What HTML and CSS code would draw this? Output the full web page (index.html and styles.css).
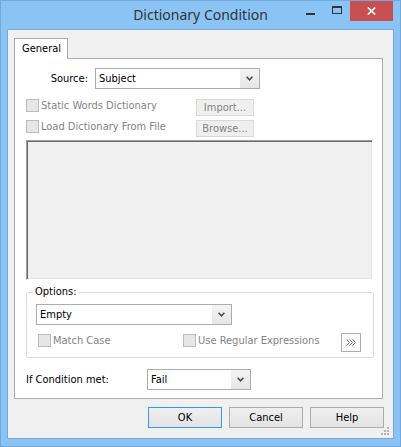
FILE: index.html
```html
<!DOCTYPE html>
<html>
<head>
<meta charset="utf-8">
<link rel="stylesheet" href="styles.css">
</head>
<body>
<div class="window">
  <div class="titlebar">
    <div class="title">Dictionary Condition</div>
    <div class="controls">
      <div class="ctl ctl-min"><span class="min-bar"></span></div>
      <div class="ctl ctl-max"><span class="max-box"></span></div>
      <div class="ctl ctl-close">
        <svg width="9" height="8" viewBox="0 0 9 8"><path d="M0.8 0.5 L8.2 7.5 M8.2 0.5 L0.8 7.5" stroke="#fff" stroke-width="1.7" fill="none"/></svg>
      </div>
    </div>
  </div>
  <div class="client">
    <div class="tabstrip"><div class="tab">General</div></div>
    <div class="panel">
      <div class="row-source">
        <label class="lbl-source">Source:</label>
        <div class="combo combo-source">
          <span class="combo-text">Subject</span>
          <span class="combo-arrow"><svg width="7" height="5" viewBox="0 0 7 5"><path d="M0.6 0.8 L3.5 3.8 L6.4 0.8" stroke="#474747" stroke-width="1.5" fill="none"/></svg></span>
        </div>
      </div>
      <div class="opt-row first">
        <div class="check disabled"><span class="box"></span><span>Static Words Dictionary</span></div>
        <div class="btn small disabled">Import...</div>
      </div>
      <div class="opt-row second">
        <div class="check disabled"><span class="box"></span><span>Load Dictionary From File</span></div>
        <div class="btn small disabled">Browse...</div>
      </div>
      <div class="listbox"></div>
      <div class="group">
        <div class="legend">Options:</div>
        <div class="combo combo-options">
          <span class="combo-text">Empty</span>
          <span class="combo-arrow"><svg width="7" height="5" viewBox="0 0 7 5"><path d="M0.6 0.8 L3.5 3.8 L6.4 0.8" stroke="#474747" stroke-width="1.5" fill="none"/></svg></span>
        </div>
        <div class="group-row">
          <div class="check disabled match"><span class="box"></span><span>Match Case</span></div>
          <div class="check disabled"><span class="box"></span><span>Use Regular Expressions</span></div>
          <div class="btn more">
            <svg width="11" height="7" viewBox="0 0 11 7"><path d="M0.5 0.5 L3.5 3.5 L0.5 6.5 M3.5 0.5 L6.5 3.5 L3.5 6.5 M6.5 0.5 L9.5 3.5 L6.5 6.5" stroke="#6a6a6a" stroke-width="1" fill="none"/></svg>
          </div>
        </div>
      </div>
      <div class="row-cond">
        <label class="lbl-cond">If Condition met:</label>
        <div class="combo combo-cond">
          <span class="combo-text">Fail</span>
          <span class="combo-arrow"><svg width="7" height="5" viewBox="0 0 7 5"><path d="M0.6 0.8 L3.5 3.8 L6.4 0.8" stroke="#474747" stroke-width="1.5" fill="none"/></svg></span>
        </div>
      </div>
    </div>
    <div class="buttons">
      <div class="btn dlg default">OK</div>
      <div class="btn dlg">Cancel</div>
      <div class="btn dlg">Help</div>
    </div>
    <svg class="grip" width="9" height="8" viewBox="0 0 9 8">
      <rect x="6" y="0" width="2" height="2" fill="#b4b4b4"/>
      <rect x="3" y="3" width="2" height="2" fill="#b4b4b4"/>
      <rect x="6" y="3" width="2" height="2" fill="#b4b4b4"/>
      <rect x="0" y="6" width="2" height="2" fill="#b4b4b4"/>
      <rect x="3" y="6" width="2" height="2" fill="#b4b4b4"/>
      <rect x="6" y="6" width="2" height="2" fill="#b4b4b4"/>
    </svg>
  </div>
</div>
</body>
</html>
```
FILE: styles.css
```css
* { box-sizing: border-box; }
body { margin: 0; }

.window {
  width: 401px;
  height: 447px;
  background: #8ac4f5;
  border: 1px solid #72a8dc;
  display: flex;
  flex-direction: column;
  font-family: "DejaVu Sans Condensed", "DejaVu Sans", sans-serif;
  font-stretch: condensed;
  font-size: 11px;
  color: #000;
}

.titlebar {
  height: 28px;
  display: grid;
  flex: none;
}
.title, .controls { grid-area: 1 / 1; }
.title {
  justify-self: center;
  font-family: "Noto Sans", sans-serif;
  font-stretch: normal;
  font-size: 14px;
  line-height: 28px;
  color: #333;
}
.controls {
  justify-self: end;
  display: flex;
  align-items: flex-start;
  margin-right: 7px;
}
.ctl { height: 20px; display: flex; align-items: center; justify-content: center; }
.ctl-min { width: 26px; }
.ctl-max { width: 27px; }
.ctl-close { width: 43px; background: #c75050; }
.min-bar { width: 9px; height: 2px; background: #333; margin-top: 5px; }
.max-box {
  width: 10px; height: 8px;
  border: 1px solid #333; border-top-width: 2px;
  margin-left: 1px; margin-top: -3px;
}

.client {
  flex: 1;
  margin: 0 6px 7px;
  border: 1px solid #7aa6d2;
  background: #f0f0f0;
  padding: 8px 10px 0 6px;
  display: flex;
  flex-direction: column;
  position: relative;
}

.tabstrip { height: 20px; display: flex; flex: none; }
.tab {
  width: 54px; height: 21px;
  background: #fff;
  border: 1px solid #acacac; border-bottom: none;
  padding: 3px 0 0 7px;
  line-height: 13px;
  position: relative; z-index: 1;
}

.panel {
  width: 369px;
  background: #fff;
  border: 1px solid #acacac;
  padding: 9px 9px 8px 11px;
  display: flex;
  flex-direction: column;
}

.row-source { display: flex; align-items: center; height: 21px; }
.lbl-source { width: 69px; text-align: right; padding-right: 7px; }
.combo-source { width: 165px; }

.combo {
  height: 21px;
  display: flex;
  border: 1px solid #acacac;
  background: #fff;
}
.combo-text { flex: 1; padding-left: 3px; line-height: 19px; }
.combo-arrow {
  width: 19px;
  background: linear-gradient(#f4f4f4, #e6e6e6);
  display: flex; align-items: center; justify-content: center;
}

.opt-row {
  display: grid;
  grid-template-columns: 170px 58px;
  height: 17px;
}
.opt-row.first { margin-top: 10px; }
.opt-row.second { margin-top: 4px; }

.check { display: flex; align-items: flex-start; gap: 2px; line-height: 13px; }
.check .box {
  width: 13px; height: 13px; flex: none;
  border: 1px solid #bcbcbc; background: #e6e6e6;
}
.check.disabled { color: #838383; }

.btn {
  display: flex; align-items: center; justify-content: center;
  border: 1px solid #acacac;
  background: linear-gradient(#f0f0f0, #e5e5e5);
}
.btn.small { height: 17px; }
.btn.disabled { border-color: #d9d9d9; background: #efefef; color: #838383; }

.listbox {
  margin-top: 3px;
  height: 140px;
  background: #f0f0f0;
  border: 1px solid;
  border-color: #a0a0a0 #fff #fff #a0a0a0;
  box-shadow: inset 1px 1px 0 #696969, inset -1px -1px 0 #e3e3e3;
}

.group {
  margin-top: 12px;
  margin-right: -1px;
  border: 1px solid #dcdcdc;
  border-radius: 2px;
  padding: 0 12px 5px 9px;
}
.legend {
  width: fit-content;
  height: 14px;
  line-height: 14px;
  margin: -8px 0 0 -3px;
  padding: 0 2px;
  background: #fff;
}
.combo-options { margin-top: 5px; width: 196px; }
.group-row {
  margin-top: 8px;
  height: 19px;
  display: grid;
  grid-template-columns: 147px 1fr 20px;
}
.group-row .check { margin-top: 1px; }
.check.match { margin-left: 2px; }
.btn.more { height: 19px; background: #fbfbfb; border-color: #adadad; }

.row-cond {
  margin-top: 11px;
  height: 21px;
  display: grid;
  grid-template-columns: 121px 104px;
  align-items: center;
}

.buttons {
  margin-top: 8px;
  margin-right: -1px;
  display: flex;
  justify-content: flex-end;
  gap: 7px;
}
.btn.dlg { width: 74px; height: 21px; background: linear-gradient(#efefef, #e3e3e3); }
.btn.default { border-color: #3399ff; }

.grip { position: absolute; right: 3px; bottom: 3px; }
```
